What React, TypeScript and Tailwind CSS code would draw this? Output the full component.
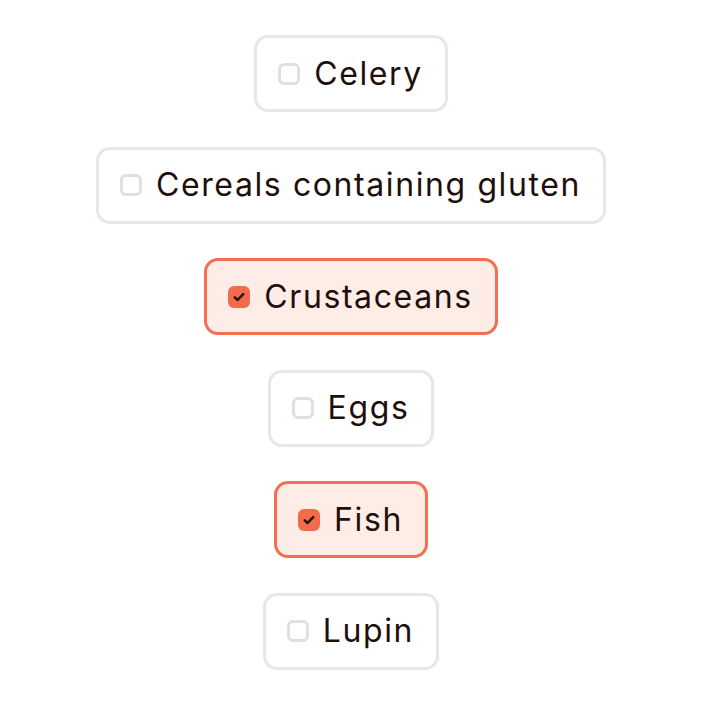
const allergens = [
  { name: "Celery", checked: false },
  { name: "Cereals containing gluten", checked: false },
  { name: "Crustaceans", checked: true },
  { name: "Eggs", checked: false },
  { name: "Fish", checked: true },
  { name: "Lupin", checked: false },
];

function CheckBox({ checked }: { checked: boolean }) {
  if (checked) {
    return (
      <span className="flex h-[22px] w-[22px] shrink-0 items-center justify-center rounded-[6px] bg-[#f26b4c]">
        <svg width="16" height="16" viewBox="0 0 16 16" fill="none">
          <path
            d="M3.8 8.4L6.6 11L12.2 5.2"
            stroke="#2a1109"
            strokeWidth="2.5"
            strokeLinecap="round"
            strokeLinejoin="round"
          />
        </svg>
      </span>
    );
  }
  return (
    <span className="h-[22px] w-[22px] shrink-0 rounded-[6px] border-[3px] border-[#e2dfdd] bg-white" />
  );
}

export default function App() {
  return (
    <div className="flex min-h-[702px] w-full flex-col items-center gap-[34.6px] bg-white pt-[35px] font-['Inter',sans-serif]">
      {allergens.map((item) => (
        <label
          key={item.name}
          className={
            item.checked
              ? "flex h-[77px] items-center gap-[14px] rounded-[14px] border-[3px] border-[#f26f50] bg-[#feece7] pl-[21px] pr-[22px]"
              : "flex h-[77px] items-center gap-[14px] rounded-[14px] border-[3px] border-[#e9e6e4] bg-white pl-[21px] pr-[22px]"
          }
        >
          <CheckBox checked={item.checked} />
          <span className="text-[32px] leading-none tracking-[0.05em] text-[#1e0f0b]">{item.name}</span>
        </label>
      ))}
    </div>
  );
}
